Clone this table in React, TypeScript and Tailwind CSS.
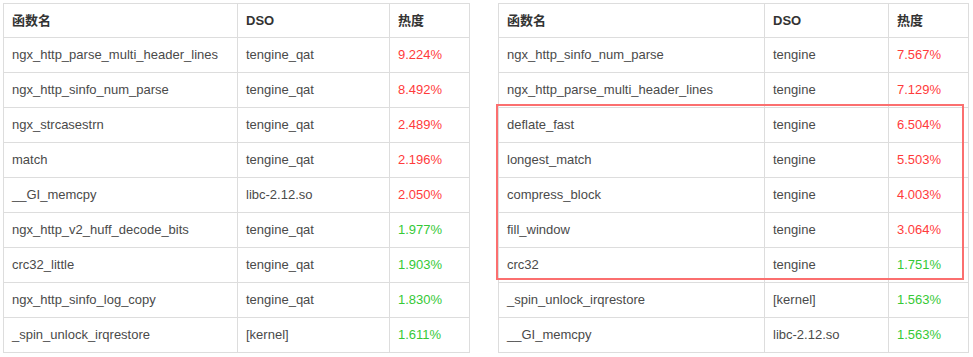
const left = [
  ["ngx_http_parse_multi_header_lines", "tengine_qat", "9.224%", true],
  ["ngx_http_sinfo_num_parse", "tengine_qat", "8.492%", true],
  ["ngx_strcasestrn", "tengine_qat", "2.489%", true],
  ["match", "tengine_qat", "2.196%", true],
  ["__GI_memcpy", "libc-2.12.so", "2.050%", true],
  ["ngx_http_v2_huff_decode_bits", "tengine_qat", "1.977%", false],
  ["crc32_little", "tengine_qat", "1.903%", false],
  ["ngx_http_sinfo_log_copy", "tengine_qat", "1.830%", false],
  ["_spin_unlock_irqrestore", "[kernel]", "1.611%", false],
] as const;

const right = [
  ["ngx_http_sinfo_num_parse", "tengine", "7.567%", true],
  ["ngx_http_parse_multi_header_lines", "tengine", "7.129%", true],
  ["deflate_fast", "tengine", "6.504%", true],
  ["longest_match", "tengine", "5.503%", true],
  ["compress_block", "tengine", "4.003%", true],
  ["fill_window", "tengine", "3.064%", true],
  ["crc32", "tengine", "1.751%", false],
  ["_spin_unlock_irqrestore", "[kernel]", "1.563%", false],
  ["__GI_memcpy", "libc-2.12.so", "1.563%", false],
] as const;

type Row = readonly [string, string, string, boolean];

function HeatTable({ rows, cols }: { rows: readonly Row[]; cols: [string, string, string] }) {
  return (
    <table className="border-collapse table-fixed text-[13px] text-[#4a4a4a]">
      <colgroup>
        <col className={cols[0]} />
        <col className={cols[1]} />
        <col className={cols[2]} />
      </colgroup>
      <thead>
        <tr className="h-[34px]">
          <th className="border border-[#dddddd] px-2 text-left font-bold text-[#333]">函数名</th>
          <th className="border border-[#dddddd] px-2 text-left font-bold text-[#333]">DSO</th>
          <th className="border border-[#dddddd] px-2 text-left font-bold text-[#333]">热度</th>
        </tr>
      </thead>
      <tbody>
        {rows.map((r) => (
          <tr key={r[0]} className="h-[35px]">
            <td className="border border-[#dddddd] px-2 whitespace-nowrap">{r[0]}</td>
            <td className="border border-[#dddddd] px-2 whitespace-nowrap">{r[1]}</td>
            <td className={`border border-[#dddddd] px-2 ${r[3] ? "text-[#ff3b3b]" : "text-[#36c936]"}`}>{r[2]}</td>
          </tr>
        ))}
      </tbody>
    </table>
  );
}

export default function App() {
  return (
    <div
      className="flex items-start gap-[28px] pl-[3px] pt-[3px] bg-white w-[973px] h-[357px] overflow-hidden"
      style={{ fontFamily: '"Liberation Sans", Arial, "Noto Sans CJK SC", sans-serif' }}
    >
      <HeatTable rows={left} cols={["w-[234px]", "w-[152px]", "w-[80px]"]} />
      <div className="relative">
        <HeatTable rows={right} cols={["w-[266px]", "w-[124px]", "w-[80px]"]} />
        {/* highlight box */}
        <div className="absolute left-[-2px] top-[101px] w-[468px] h-[176px] border-2 border-[#fb6f6f] pointer-events-none" />
      </div>
    </div>
  );
}
